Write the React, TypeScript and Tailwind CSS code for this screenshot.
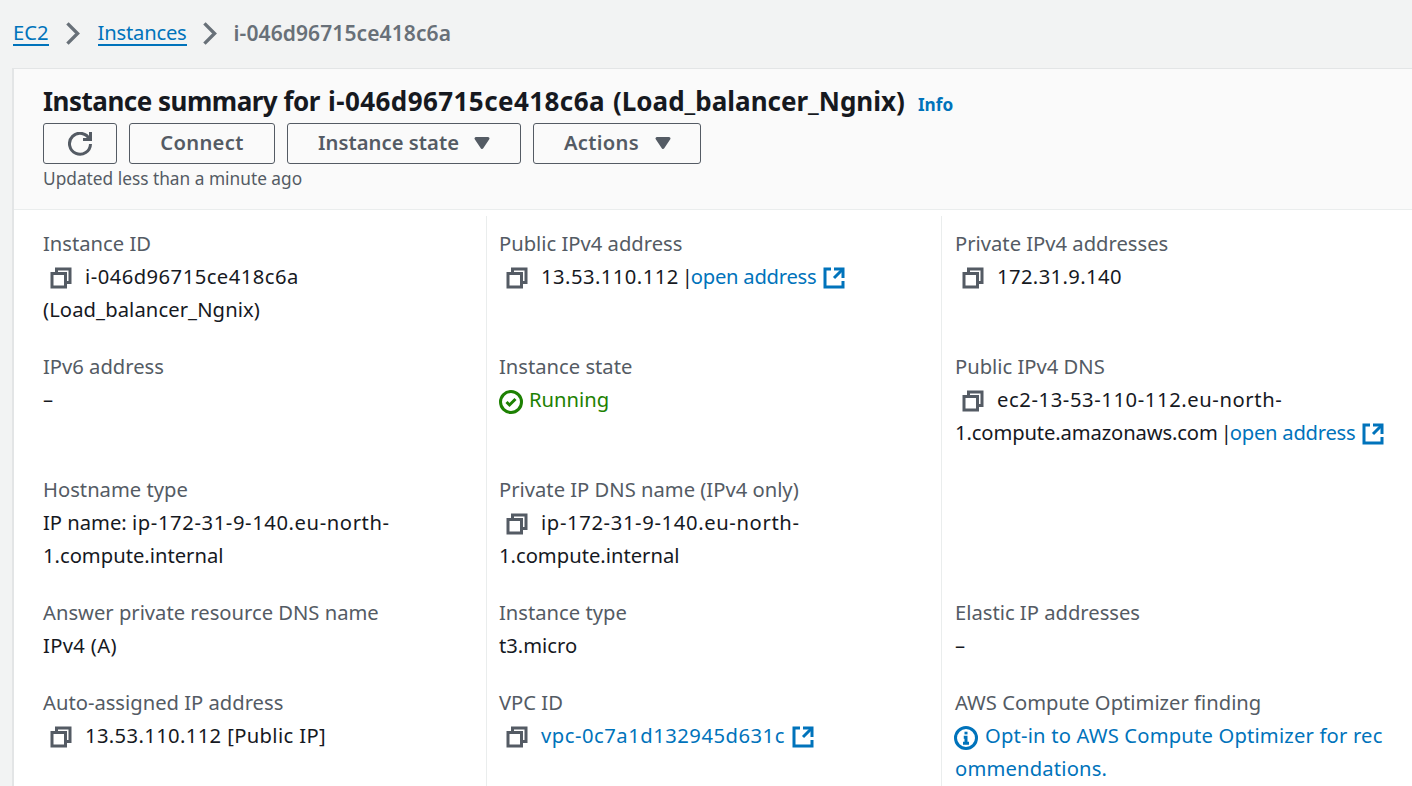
import React from "react";

const Icon = ({ children, className = "" }: { children: React.ReactNode; className?: string }) => (
  <svg
    viewBox="0 0 16 16"
    fill="none"
    stroke="currentColor"
    strokeWidth={2}
    className={`inline-block w-6 h-6 shrink-0 ${className}`}
  >
    {children}
  </svg>
);

const CopyIcon = () => (
  <Icon className="text-[#545b64] ml-[6px] mr-[12px] align-[-6px]">
    <path d="M2 5h9v9H2z" />
    <path d="M5 5V2h9v9h-3" />
  </Icon>
);

const ExternalIcon = () => (
  <Icon className="text-[#0073bb] ml-[6px] align-[-6px]">
    <path d="M14 8V2H8" />
    <path d="M14 2 8 8" />
    <path d="M6 2H2v12h12v-4" />
  </Icon>
);

const Caret = () => (
  <svg viewBox="0 0 16 16" className="w-6 h-6 text-[#545b64]" fill="currentColor" stroke="currentColor" strokeWidth={2}>
    <path d="M4 5h8l-4 6-4-6z" strokeLinejoin="round" />
  </svg>
);

const Chevron = ({ className = "" }: { className?: string }) => (
  <Icon className={`w-[27px] h-[27px] text-[#687078] ${className}`}>
    <path d="m5 2 6 6-6 6" />
  </Icon>
);

const Field = ({ label, children, className = "" }: { label: string; children: React.ReactNode; className?: string }) => (
  <div className={`pb-6 ${className}`}>
    <div className="text-[#545b64]">{label}</div>
    <div className="text-[#16191f]">{children}</div>
  </div>
);

const A = ({ children }: { children: React.ReactNode }) => (
  <span className="text-[#0073bb] tracking-[-0.25px]">{children}</span>
);

const Pipe = () => <span className="ml-[3px] mr-[-2px]">|</span>;

const Btn = ({ children, className = "" }: { children: React.ReactNode; className?: string }) => (
  <button
    type="button"
    className={`h-[41px] pb-[2px] flex items-center rounded-[3px] border border-[#545b64] font-semibold text-[#545b64] ${className}`}
  >
    {children}
  </button>
);

export default function App() {
  const col1 = "pl-3";
  const col2 = "pl-3 border-l border-[#eaeded]";
  const col3 = "pl-[13px] pr-[22px] border-l border-[#eaeded]";
  return (
    <div className="h-[786px] w-[1412px] overflow-hidden bg-[#f2f3f3] text-[20.2px] leading-[33px] font-['Noto_Sans',sans-serif]">
      {/* breadcrumbs */}
      <div className="h-[68px] pl-[13px] pt-[19px] flex items-start">
        <span className="text-[#0073bb] border-b-2 border-[#0073bb] leading-[26px] h-[27px]">EC2</span>
        <Chevron className="ml-[10px] mt-px" />
        <span className="ml-[12px] text-[#0073bb] tracking-[-0.2px] border-b-2 border-[#0073bb] leading-[26px] h-[27px]">
          Instances
        </span>
        <Chevron className="ml-[9px] mt-px" />
        <span className="ml-[11px] font-semibold text-[21px] tracking-[0.1px] text-[#687078] leading-[28px]">
          i-046d96715ce418c6a
        </span>
      </div>

      {/* panel */}
      <div className="ml-3 h-[718px] bg-white border-l-2 border-t border-[#e3e5e6]">
        <div className="h-[141px] bg-[#fafafa] border-b border-[#eaeded] pl-[29px] pt-[14px]">
          <div className="flex items-baseline text-[#16191f] text-[26px] font-bold leading-[37px]">
            <span className="tracking-[-0.5px] mr-[8px]">Instance summary for</span>
            <span className="tracking-[0.43px] mr-[8px]">i-046d96715ce418c6a</span>
            <span>(Load_balancer_Ngnix)</span>
            <span className="ml-[13px] text-[17.2px] font-bold text-[#0073bb]">Info</span>
          </div>
          <div className="flex gap-3">
            <Btn className="w-[74px] justify-center !pb-0">
              <svg viewBox="0 0 16 16" fill="none" stroke="currentColor" strokeWidth={2} className="w-6 h-6">
                <path d="M10 5h5V0" />
                <path d="M15 8a7 7 0 1 1-.6-3" />
              </svg>
            </Btn>
            <Btn className="w-[146px] justify-center tracking-[0.3px]">Connect</Btn>
            <Btn className="w-[234px] pl-[30px] gap-[11px] tracking-[0.05px]">
              Instance state
              <Caret />
            </Btn>
            <Btn className="w-[168px] pl-[30px] gap-[12px] tracking-[0.3px]">
              Actions
              <Caret />
            </Btn>
          </div>
          <div className="text-[17.3px] leading-[27px] text-[#545b64] mt-[1px]">Updated less than a minute ago</div>
        </div>

        <div className="mt-[6px] pl-[17px] grid grid-cols-[455px_455px_471px] [&>div:nth-child(-n+3)]:pt-[11px]">
          <Field label="Instance ID" className={col1}>
            <CopyIcon />
            <span className="tracking-[0.47px]">i-046d96715ce418c6a</span>
            <br />
            <span className="tracking-[0.1px]">(Load_balancer_Ngnix)</span>
          </Field>
          <Field label="Public IPv4 address" className={col2}>
            <CopyIcon />
            <span className="tracking-[0.46px]">13.53.110.112</span>
            <Pipe />
            <A>open address</A>
            <ExternalIcon />
          </Field>
          <Field label="Private IPv4 addresses" className={col3}>
            <CopyIcon />
            <span className="tracking-[0.4px]">172.31.9.140</span>
          </Field>

          <Field label="IPv6 address" className={col1}>
            –
          </Field>
          <Field label="Instance state" className={col2}>
            <span className="text-[#1d8102]">
              <Icon className="mr-[6px] align-[-7px]">
                <circle cx="8" cy="8" r="7" />
                <path d="m5 8 2 2 4-4" />
              </Icon>
              Running
            </span>
          </Field>
          <Field label="Public IPv4 DNS" className={col3}>
            <CopyIcon />
            <span className="tracking-[0.6px]">ec2-13-53-110-112.eu-north-</span>
            <span className="tracking-[-0.12px]">1.compute.amazonaws.com</span>
            <Pipe />
            <A>open address</A>
            <ExternalIcon />
          </Field>

          <Field label="Hostname type" className={`${col1} pr-20`}>
            IP name: <span className="tracking-[0.6px]">ip-172-31-9-140.eu-north-</span>1.compute.internal
          </Field>
          <Field label="Private IP DNS name (IPv4 only)" className={`${col2} pr-20`}>
            <CopyIcon />
            <span className="tracking-[0.64px]">ip-172-31-9-140.eu-north-</span>1.compute.internal
          </Field>
          <div className={col3} />

          <Field label="Answer private resource DNS name" className={col1}>
            <span className="tracking-[0.35px]">IPv4 (A)</span>
          </Field>
          <Field label="Instance type" className={col2}>
            t3.micro
          </Field>
          <Field label="Elastic IP addresses" className={col3}>
            –
          </Field>

          <Field label="Auto-assigned IP address" className={col1}>
            <CopyIcon />
            <span className="tracking-[0.37px]">13.53.110.112 [Public IP]</span>
          </Field>
          <Field label="VPC ID" className={col2}>
            <CopyIcon />
            <span className="text-[#0073bb] tracking-[0.52px]">vpc-0c7a1d132945d631c</span>
            <ExternalIcon />
          </Field>
          <Field label="AWS Compute Optimizer finding" className={col3}>
            <span className="text-[#0073bb] break-all tracking-[0.18px]">
              <Icon className="-ml-px mr-[7px] align-[-7px]">
                <circle cx="8" cy="8" r="7" />
                <path d="M8 12V7.5H6.5M6 11.5h4" />
                <path d="M8 3.8v1.8" />
              </Icon>
              Opt-in to AWS Compute Optimizer for recommendations.
            </span>
          </Field>
        </div>
      </div>
    </div>
  );
}
